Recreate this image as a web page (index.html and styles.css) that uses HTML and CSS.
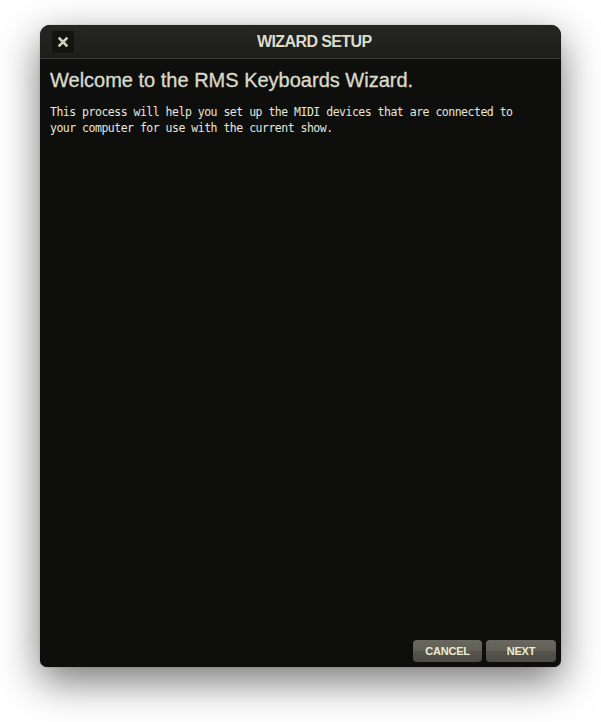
FILE: index.html
```html
<!DOCTYPE html>
<html>
<head>
<meta charset="utf-8">
<link rel="stylesheet" href="styles.css">
</head>
<body>
<div class="window">
  <div class="titlebar">
    <div class="close">
      <svg width="10" height="10" viewBox="0 0 10 10"><path d="M1.5 1.5 L8.5 8.5 M8.5 1.5 L1.5 8.5" stroke="#cfcfc0" stroke-width="2.6" stroke-linecap="square"/></svg>
    </div>
    <div class="title">WIZARD SETUP</div>
  </div>
  <div class="content">
    <h1 class="heading">Welcome to the RMS Keyboards Wizard.</h1>
    <p class="intro">This process will help you set up the MIDI devices that are connected to<br>your computer for use with the current show.</p>
  </div>
  <div class="footer">
    <button class="btn btn-cancel">CANCEL</button>
    <button class="btn btn-next">NEXT</button>
  </div>
</div>
</body>
</html>
```
FILE: styles.css
```css
html, body {
  margin: 0;
  padding: 0;
  background: #ffffff;
}
body {
  padding: 25px 0 55px 40px;
}
.window {
  width: 521px;
  height: 642px;
  background: #0e0e0c;
  border-radius: 10px 10px 7px 7px;
  box-shadow: 0 14px 40px rgba(0, 0, 0, 0.55), 0 0 1px rgba(0, 0, 0, 0.6);
  display: flex;
  flex-direction: column;
  overflow: hidden;
}
.titlebar {
  height: 33px;
  flex: none;
  background: linear-gradient(#252522, #1e1e1b);
  border-bottom: 1px solid #393935;
  display: flex;
  align-items: center;
  padding-left: 12px;
}
.close {
  width: 22px;
  height: 22px;
  background: #131311;
  display: flex;
  align-items: center;
  justify-content: center;
}
.title {
  margin-left: 183px;
  font-family: "Liberation Sans", Arial, sans-serif;
  font-weight: bold;
  font-size: 16px;
  letter-spacing: -0.6px;
  color: #dcdccb;
}
.content {
  flex: 1;
  padding: 9px 10px 0;
}
.heading {
  margin: 0 0 12px;
  font-family: "Liberation Sans", Arial, sans-serif;
  font-weight: normal;
  font-size: 20px;
  line-height: 24px;
  color: #d9d9c9;
  -webkit-text-stroke: 0.35px #d9d9c9;
}
.intro {
  margin: 0;
  font-family: "DejaVu Sans Mono", monospace;
  font-size: 11.5px;
  letter-spacing: -0.5px;
  line-height: 16px;
  color: #e6e6de;
}
.footer {
  display: flex;
  justify-content: flex-end;
  gap: 4px;
  padding: 0 5px 5px 0;
}
.btn {
  height: 22px;
  padding: 0;
  border: none;
  border-radius: 4px;
  background: linear-gradient(#68685f 0%, #606057 50%, #54544c 52%, #4d4d45 100%);
  font-family: "Liberation Sans", Arial, sans-serif;
  font-weight: bold;
  font-size: 11px;
  letter-spacing: -0.2px;
  color: #ecebd2;
}
.btn-cancel { width: 69px; }
.btn-next { width: 70px; }
```
